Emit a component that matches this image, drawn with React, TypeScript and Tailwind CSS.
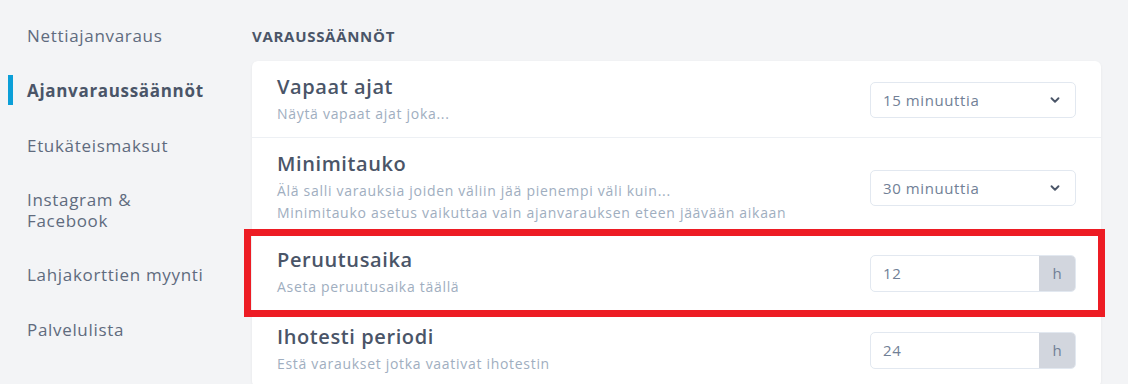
import { ChevronDown } from 'lucide-react'

const navItems = [
  { label: 'Nettiajanvaraus' },
  { label: 'Ajanvaraussäännöt', active: true },
  { label: 'Etukäteismaksut' },
  { label: 'Instagram & Facebook', tight: true },
  { label: 'Lahjakorttien myynti' },
  { label: 'Palvelulista' },
]

function Select({ value }: { value: string }) {
  return (
    <div className="w-[206px] h-[36px] border border-[#e2e8f0] rounded-[5px] bg-white flex items-center justify-between pl-[12px] pr-[13px]">
      <span className="text-[15px] tracking-[0.04em] text-[#718096]">{value}</span>
      <ChevronDown size={14} strokeWidth={3.2} className="text-[#4a5568]" />
    </div>
  )
}

function HourInput({ value }: { value: string }) {
  return (
    <div className="w-[206px] h-[37px] border border-[#e2e8f0] rounded-[5px] bg-white flex overflow-hidden">
      <span className="flex-1 flex items-center pl-[12px] text-[15px] tracking-[0.04em] text-[#718096]">{value}</span>
      <span className="w-[36px] bg-[#d2d6de] flex items-center justify-center text-[15px] text-[#718096]">h</span>
    </div>
  )
}

function Row({
  title,
  lines,
  control,
  last,
  tightBottom,
}: {
  title: string
  lines: string[]
  control: React.ReactNode
  last?: boolean
  tightBottom?: boolean
}) {
  return (
    <div
      className={`flex items-center justify-between pl-[25px] pr-[25px] pt-[14px] ${tightBottom ? 'pb-[9px]' : 'pb-[12px]'} ${
        last ? '' : 'border-b border-[#edf0f4]'
      }`}
    >
      <div>
        <p className="text-[20px] leading-[24px] font-semibold tracking-[0.03em] text-[#4a5568]">{title}</p>
        <div className="mt-[4px]">
          {lines.map(l => (
            <p key={l} className="text-[14px] leading-[22px] tracking-[0.05em] text-[#a0aec0]">{l}</p>
          ))}
        </div>
      </div>
      {control}
    </div>
  )
}

export default function App() {
  return (
    <div className="w-[1128px] h-[384px] overflow-hidden bg-[#f3f4f6] flex font-['Open_Sans',sans-serif]">
      {/* Sidebar */}
      <aside className="w-[252px] shrink-0 pt-[24px] flex flex-col gap-[32px]">
        {navItems.map(item => (
          <div key={item.label} className="relative pl-[27px]">
            {item.active && <span className="absolute left-[8px] top-[-4px] w-[5px] h-[30px] bg-[#0b9fd8]" />}
            <span
              className={`block w-[180px] text-[17px] tracking-[0.04em] ${item.tight ? 'leading-[21px]' : 'leading-[23px]'} ${
                item.active ? 'font-bold text-[#4a5568]' : 'text-[#5f6b7e]'
              }`}
            >
              {item.label}
            </span>
          </div>
        ))}
      </aside>

      {/* Content */}
      <main className="flex-1 pr-[27px]">
        <h2 className="mt-[26px] text-[15px] leading-[20px] font-bold tracking-[0.7px] text-[#4a5568]">VARAUSSÄÄNNÖT</h2>
        <div className="relative mt-[15px] bg-white rounded-[6px] shadow-[0_1px_3px_rgba(0,0,0,0.06)]">
          <Row title="Vapaat ajat" lines={['Näytä vapaat ajat joka...']} control={<Select value="15 minuuttia" />} />
          <Row
            title="Minimitauko"
            lines={[
              'Älä salli varauksia joiden väliin jää pienempi väli kuin...',
              'Minimitauko asetus vaikuttaa vain ajanvarauksen eteen jäävään aikaan',
            ]}
            control={<Select value="30 minuuttia" />}
            tightBottom
          />
          <Row title="Peruutusaika" lines={['Aseta peruutusaika täällä']} control={<HourInput value="12" />} />
          <Row title="Ihotesti periodi" lines={['Estä varaukset jotka vaativat ihotestin']} control={<HourInput value="24" />} last />

          {/* highlight annotation */}
          <div className="absolute left-[-8px] right-[-4px] top-[168px] h-[88px] border-[7px] border-[#ed1c24] pointer-events-none" />
        </div>
      </main>
    </div>
  )
}
